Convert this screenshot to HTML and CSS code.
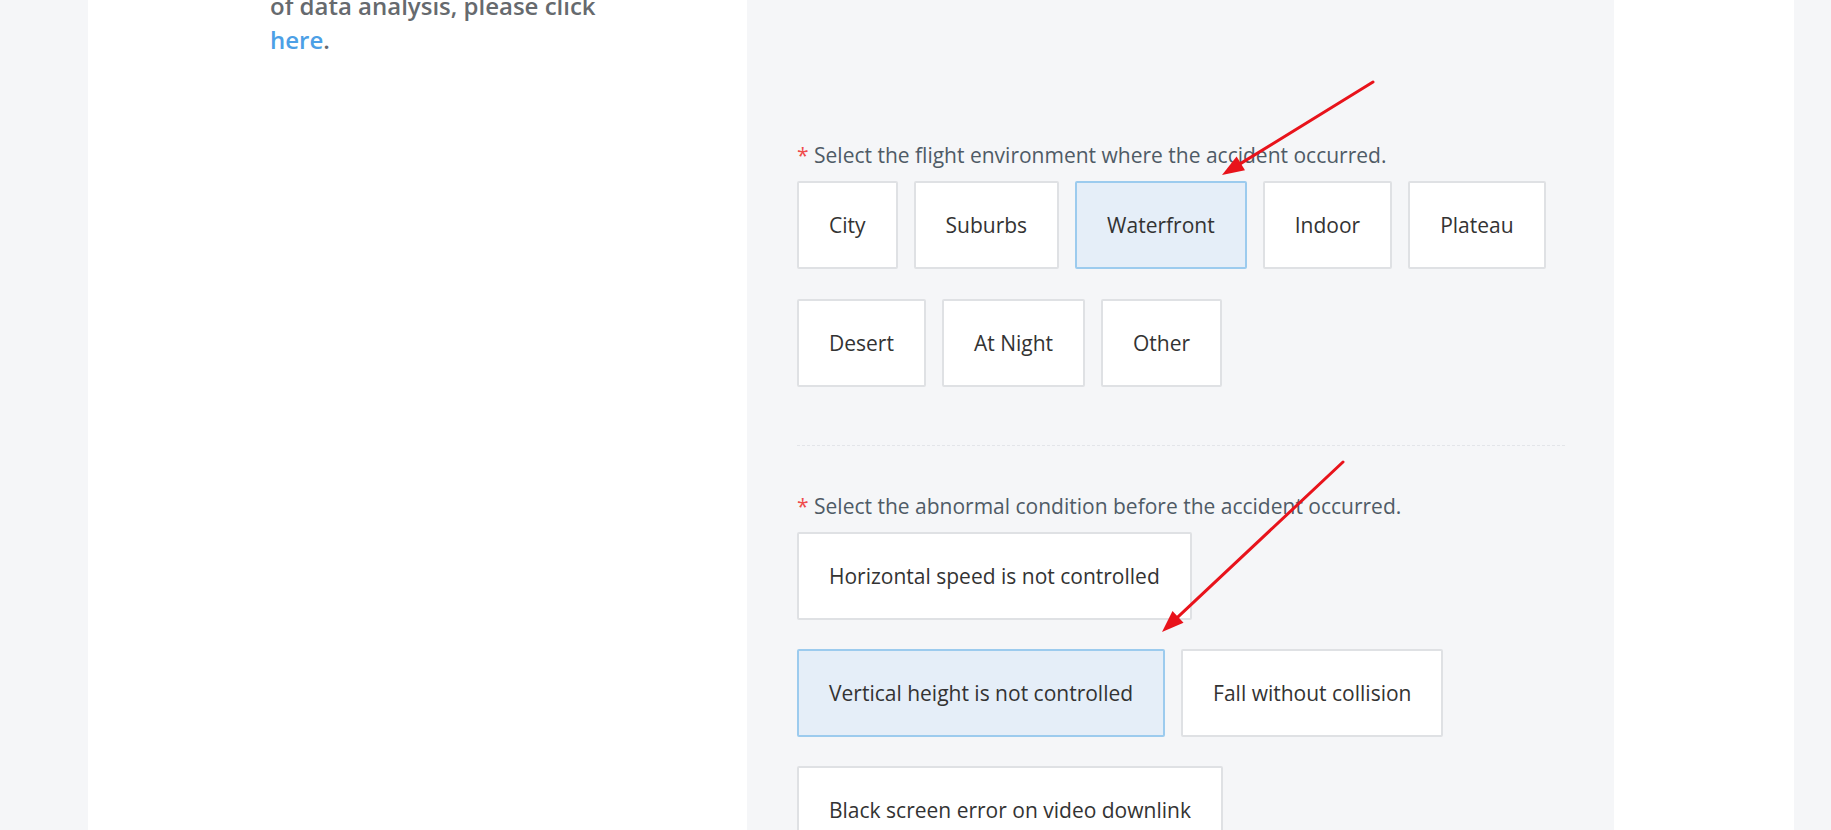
FILE: index.html
```html
<!DOCTYPE html>
<html lang="en">
<head>
<meta charset="utf-8">
<title>Flight accident report</title>
<link rel="stylesheet" href="styles.css">
</head>
<body>
<div class="page">
  <aside class="intro">
    <p class="intro-text">of data analysis, please click<br><a class="intro-link" href="#">here</a>.</p>
  </aside>
  <main class="form">
    <section class="field">
      <div class="field-label"><span class="req">*</span> Select the flight environment where the accident occurred.</div>
      <div class="options">
        <button class="opt">City</button>
        <button class="opt">Suburbs</button>
        <button class="opt opt-selected">Waterfront</button>
        <button class="opt">Indoor</button>
        <button class="opt">Plateau</button>
        <button class="opt">Desert</button>
        <button class="opt">At Night</button>
        <button class="opt">Other</button>
      </div>
    </section>
    <hr class="divider">
    <section class="field">
      <div class="field-label"><span class="req">*</span> Select the abnormal condition before the accident occurred.</div>
      <div class="options options-tight">
        <button class="opt">Horizontal speed is not controlled</button>
        <button class="opt opt-selected">Vertical height is not controlled</button>
        <button class="opt">Fall without collision</button>
        <button class="opt">Black screen error on video downlink</button>
      </div>
    </section>
  </main>
  <div class="aside-right"></div>
</div>
<svg class="annot" viewBox="0 0 1831 830" width="1831" height="830">
  <line x1="1373" y1="82" x2="1240.8" y2="163.4" stroke="#e8131b" stroke-width="3" stroke-linecap="round"/>
  <polygon points="1222,175 1245,170.2 1236.6,156.6" fill="#e8131b"/>
  <line x1="1343" y1="462" x2="1178" y2="616.9" stroke="#e8131b" stroke-width="3" stroke-linecap="round"/>
  <polygon points="1162,632 1183.5,622.7 1172.5,611.1" fill="#e8131b"/>
</svg>
</body>
</html>
```
FILE: styles.css
```css
html, body {
  margin: 0;
  padding: 0;
  height: 830px;
  overflow: hidden;
  background: #f5f6f8;
  font-family: "Open Sans", "Noto Sans", sans-serif;
}
.page {
  display: flex;
  margin: 0 37px 0 88px;
  height: 830px;
  background: #fff;
}
.intro {
  width: 659px;
  flex: none;
  padding-left: 182px;
  box-sizing: border-box;
}
.intro-text {
  margin: -11px 0 0;
  font-size: 24px;
  line-height: 34px;
  font-weight: 600;
  color: #666a6e;
}
.intro-link {
  color: #4ca0e6;
  text-decoration: none;
}
.form {
  width: 867px;
  flex: none;
  background: #f5f6f8;
  padding: 141px 0 0 50px;
  box-sizing: border-box;
}
.aside-right {
  flex: 1;
}
.field-label {
  font-size: 21px;
  line-height: 28px;
  color: #4f5b66;
  margin-bottom: 12px;
}
.req {
  color: #ef4b4b;
}
.options {
  display: flex;
  flex-wrap: wrap;
  width: 752px;
  column-gap: 16px;
  row-gap: 30px;
}
.options-tight {
  row-gap: 29px;
}
.opt {
  height: 88px;
  padding: 0 30px;
  box-sizing: border-box;
  background: #fff;
  border: 2px solid #dfe1e4;
  border-radius: 2px;
  font-family: "Open Sans", "Noto Sans", sans-serif;
  font-size: 21px;
  color: #333;
  cursor: pointer;
}
.opt-selected {
  background: #e5eef8;
  border-color: #9ccbee;
}
.divider {
  width: 768px;
  margin: 58px 0 46px;
  border: 0;
  border-top: 1px dashed #e3e5e9;
}
.annot {
  position: absolute;
  left: 0;
  top: 0;
  pointer-events: none;
}
```
